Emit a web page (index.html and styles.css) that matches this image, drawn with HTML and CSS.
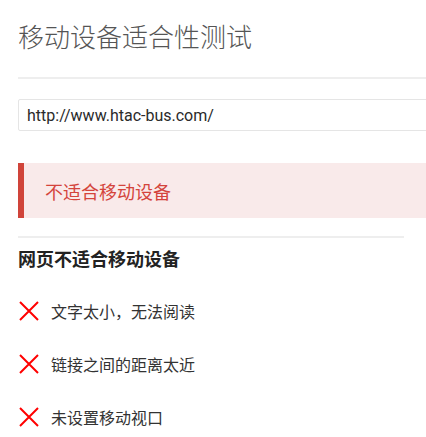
FILE: index.html
```html
<!DOCTYPE html>
<html lang="zh-CN">
<head>
    <meta charset="UTF-8">
    <meta name="viewport" content="width=device-width, initial-scale=1.0">
    <title>移动设备适合性测试</title>
    <link rel="stylesheet" href="styles.css">
</head>
<body>

    <div class="page">
        <h1 class="title">移动设备适合性测试</h1>

        <hr class="rule">

        <!-- URL field -->
        <input class="url" type="text" value="http://www.htac-bus.com/">

        <!-- Result banner -->
        <div class="alert">不适合移动设备</div>

        <hr class="rule short">

        <h2 class="subtitle">网页不适合移动设备</h2>

        <ul class="issues">
            <li class="issue">
                <svg class="cross" width="20" height="20" viewBox="0 0 20 20"><path d="M1 1L19 19M19 1L1 19" stroke="#f00" stroke-width="2"/></svg>
                <span>文字太小，无法阅读</span>
            </li>
            <li class="issue">
                <svg class="cross" width="20" height="20" viewBox="0 0 20 20"><path d="M1 1L19 19M19 1L1 19" stroke="#f00" stroke-width="2"/></svg>
                <span>链接之间的距离太近</span>
            </li>
            <li class="issue">
                <svg class="cross" width="20" height="20" viewBox="0 0 20 20"><path d="M1 1L19 19M19 1L1 19" stroke="#f00" stroke-width="2"/></svg>
                <span>未设置移动视口</span>
            </li>
        </ul>
    </div>

</body>
</html>
```

FILE: styles.css
```css
html, body {
    overflow-x: hidden;
}
body {
    margin: 0;
    font-family: "Noto Sans CJK SC", "Liberation Sans", sans-serif;
    color: #333;
    background: #fff;
}
.page {
    padding: 18px 0 0 18px;
}
.title {
    margin: 0;
    font-size: 26px;
    line-height: 36px;
    font-weight: 300;
    color: #555;
}
.rule {
    margin: 23px 0 0;
    border: 0;
    border-top: 2px solid #eee;
    width: calc(100% + 10px);
}
.rule.short {
    margin-top: 18px;
    width: 386px;
}
.url {
    display: block;
    box-sizing: border-box;
    margin-top: 20px;
    width: calc(100% + 10px);
    height: 32px;
    padding: 0 8px;
    border: 1px solid #e5e5e5;
    border-radius: 2px;
    font-family: Roboto, "Liberation Sans", sans-serif;
    font-size: 16px;
    color: #2a2a2a;
    outline: none;
}
.alert {
    display: flex;
    align-items: center;
    box-sizing: border-box;
    margin-top: 32px;
    height: 55px;
    padding-left: 21px;
    border-left: 6px solid #d0443a;
    background: #f9eaea;
    font-size: 18px;
    color: #d4443c;
}
.subtitle {
    margin: 7px 0 0;
    font-size: 18px;
    line-height: 26px;
    font-weight: bold;
    color: #222;
}
.issues {
    list-style: none;
    margin: 13px 0 0;
    padding: 0;
}
.issue {
    display: flex;
    align-items: center;
    gap: 12px;
    height: 53px;
    padding-left: 1px;
    font-size: 16px;
    color: #333;
}
.cross {
    flex: none;
}
```
